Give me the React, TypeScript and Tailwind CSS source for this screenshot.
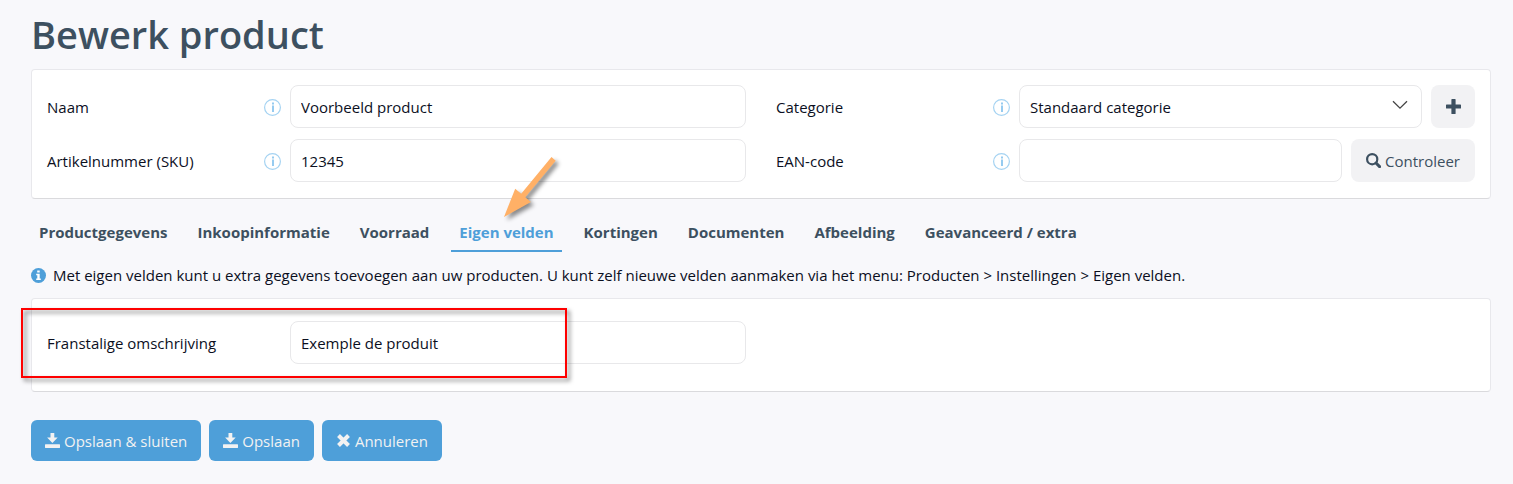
import React, { useState } from 'react';

const tabs = [
  'Productgegevens',
  'Inkoopinformatie',
  'Voorraad',
  'Eigen velden',
  'Kortingen',
  'Documenten',
  'Afbeelding',
  'Geavanceerd / extra'
];

const controlClass =
  'w-full min-w-0 flex-1 h-[43px] rounded-lg border border-[#e8e8ea] bg-white px-2.5 text-[15px] text-[#0b0f1e] outline-none focus:border-[#4e9fd9]';

const cardClass = 'relative rounded border border-[#e8e8ec] border-b-[#dadadd] bg-white px-[15px]';

const grayButtonClass =
  'flex h-[43px] shrink-0 items-center justify-center gap-1 rounded-lg bg-[#f2f2f4] text-[#3d5060] hover:bg-[#e8e8ec]';

const PlusIcon = () => (
  <svg viewBox="0 0 15 15" className="h-[15px] w-[15px]" fill="currentColor" aria-hidden="true">
    <path d="M6 0h3a.6.6 0 0 1 .6.6v4.8h4.8a.6.6 0 0 1 .6.6v3a.6.6 0 0 1-.6.6H9.600v4.800a.6.6 0 0 1-.6.6H6a.6.6 0 0 1-.6-.6V9.600H.6A.6.6 0 0 1 0 9V6a.6.6 0 0 1 .6-.6h4.800V.6A.6.6 0 0 1 6 0z" />
  </svg>
);

const SearchIcon = () => (
  <svg viewBox="0 0 15 15" className="h-[15px] w-[15px]" fill="none" stroke="currentColor" aria-hidden="true">
    <circle cx="6.200" cy="6.200" r="5.100" strokeWidth="2.200" />
    <path d="M10 10l3.600 3.600" strokeWidth="3" strokeLinecap="round" />
  </svg>
);

const SaveIcon = () => (
  <svg viewBox="0 0 15 15" className="h-[15px] w-[15px]" fill="currentColor" aria-hidden="true">
    <path d="M5.500 0h3.800v4.600h3.400L7.400 10 2.100 4.600h3.400z" />
    <path d="M.4 11.300h14.200a.4.4 0 0 1 .4.4v2.900a.4.4 0 0 1-.4.4H.4a.4.4 0 0 1-.4-.4v-2.900a.4.4 0 0 1 .4-.4z" />
  </svg>
);

const RemoveIcon = () => (
  <svg viewBox="0 0 15 15" className="h-[15px] w-[15px]" fill="none" stroke="currentColor" aria-hidden="true">
    <path d="M2.500 2.500l10 10M12.500 2.500l-10 10" strokeWidth="4" />
  </svg>
);

const InfoSignIcon = () => (
  <svg viewBox="0 0 15 15" className="h-[15px] w-[15px] shrink-0" aria-hidden="true">
    <circle cx="7.500" cy="7.500" r="7.500" fill="#4e9fd9" />
    <path d="M6.200 2.500h2.500v2H6.200zM5.200 5.800h3.500v4.800h1.100v1.500H5.200v-1.500h1.100V7.300H5.200z" fill="#fff" />
  </svg>
);

const InfoButton = ({ name }: { name: string }) => (
  <button type="button" aria-label={`Uitleg bij ${name}`} className="mt-0.5 h-[17px] w-[17px] shrink-0">
    <svg viewBox="0 0 17 17" className="block h-[17px] w-[17px]" aria-hidden="true">
      <circle cx="8.500" cy="8.500" r="7.900" fill="none" stroke="#a5d3f2" strokeWidth="1.200" />
      <path d="M8 3.500h2v2H8zM8 6.500h2V13H8z" fill="#96cbf0" />
    </svg>
  </button>
);

interface FieldProps {
  id: string;
  label: string;
  info?: boolean;
  children: React.ReactNode;
}

const Field: React.FC<FieldProps> = ({ id, label, info, children }) => (
  <div className="flex items-center">
    <div className="flex w-[243px] shrink-0 items-center justify-between pr-[9px]">
      <label htmlFor={id} className="font-medium">{label}</label>
      {info && <InfoButton name={label} />}
    </div>
    <div className="flex min-w-0 flex-1 gap-[9px]">{children}</div>
  </div>
);

const App: React.FC = () => {
  const [activeTab, setActiveTab] = useState('Eigen velden');

  return (
    <main className="min-h-screen bg-[#f8f8fb] pt-2.5 pr-[22px] pb-5 pl-[31px] font-['Open_Sans',sans-serif] text-[15px] leading-6 text-[#0b0f1e]">
      <h1 className="mb-[11px] text-[38px] leading-[48px] font-semibold text-[#3d5060]">Bewerk product</h1>

      <form onSubmit={(e) => e.preventDefault()}>
        <section className={`${cardClass} pt-[15px] pb-4`}>
          <div className="grid grid-cols-1 gap-x-[30px] gap-y-[11px] lg:grid-cols-2">
            <Field id="naam" label="Naam" info>
              <input id="naam" type="text" defaultValue="Voorbeeld product" className={controlClass} />
            </Field>
            <Field id="categorie" label="Categorie" info>
              <div className="relative min-w-0 flex-1">
                <select id="categorie" className={`${controlClass} appearance-none`}>
                  <option>Standaard categorie</option>
                </select>
                <svg
                  viewBox="0 0 16 10"
                  className="pointer-events-none absolute top-[15px] right-3.5 h-2.5 w-4"
                  fill="none"
                  stroke="#444"
                  strokeWidth="1.300"
                  aria-hidden="true"
                >
                  <path d="M1 1.200l7 7 7-7" />
                </svg>
              </div>
              <button type="button" aria-label="Categorie toevoegen" className={`${grayButtonClass} w-11`}>
                <PlusIcon />
              </button>
            </Field>
            <Field id="sku" label="Artikelnummer (SKU)" info>
              <input id="sku" type="text" defaultValue="12345" className={controlClass} />
            </Field>
            <Field id="ean" label="EAN-code" info>
              <input id="ean" type="text" className={controlClass} />
              <button type="button" className={`${grayButtonClass} px-[15px]`}>
                <SearchIcon />
                Controleer
              </button>
            </Field>
          </div>
        </section>

        <nav className="mt-[15px] flex flex-wrap gap-x-3.5">
          {tabs.map((tab) => {
            const isActive = tab === activeTab;

            return (
              <div key={tab} className="relative">
                <button
                  type="button"
                  onClick={() => setActiveTab(tab)}
                  className={`border-b-2 px-2 pt-1.5 pb-1.5 font-bold ${
                    isActive ? 'border-[#4e9fd9] text-[#4e9fd9]' : 'border-transparent text-[#3d5060]'
                  }`}
                >
                  {tab}
                </button>
                {/* pointer to the custom fields tab */}
                {tab === 'Eigen velden' && (
                  <svg
                    viewBox="0 0 64 76"
                    className="pointer-events-none absolute bottom-[26px] left-[49px] h-[76px] w-16 drop-shadow-[3px_3px_2px_rgba(0,0,0,0.45)]"
                    fill="#ffb066"
                    aria-hidden="true"
                  >
                    <path d="M4 67L15.200 38.700l6 5L51.500 7l4.200 3.800L25.300 47.200l5.600 4.900z" />
                  </svg>
                )}
              </div>
            );
          })}
        </nav>

        <p className="my-[11px] flex items-center gap-[7px]">
          <InfoSignIcon />
          Met eigen velden kunt u extra gegevens toevoegen aan uw producten. U kunt zelf nieuwe velden aanmaken via het menu: Producten &gt; Instellingen &gt; Eigen velden.
        </p>

        <section className={`${cardClass} pt-[22px] pb-[27px]`}>
          <div className="grid grid-cols-1 gap-x-[30px] lg:grid-cols-2">
            <Field id="omschrijving" label="Franstalige omschrijving">
              <input id="omschrijving" type="text" defaultValue="Exemple de produit" className={controlClass} />
            </Field>
          </div>
          {/* highlight around the field */}
          <div className="pointer-events-none absolute top-[9px] -left-[11px] h-[70px] w-[546px] border-2 border-[#fe0000] drop-shadow-[3px_3px_2px_rgba(0,0,0,0.5)]" />
        </section>

        <div className="mt-7 flex flex-wrap gap-2">
          {[
            { label: 'Opslaan & sluiten', Icon: SaveIcon },
            { label: 'Opslaan', Icon: SaveIcon },
            { label: 'Annuleren', Icon: RemoveIcon }
          ].map(({ label, Icon }) => (
            <button
              key={label}
              type="button"
              className="flex h-[41px] items-center gap-1 rounded-md bg-[#4e9fd9] px-3.5 font-medium text-[#f2f2f2] hover:bg-[#3f90ca]"
            >
              <Icon />
              {label}
            </button>
          ))}
        </div>
      </form>
    </main>
  );
};

export default App;
